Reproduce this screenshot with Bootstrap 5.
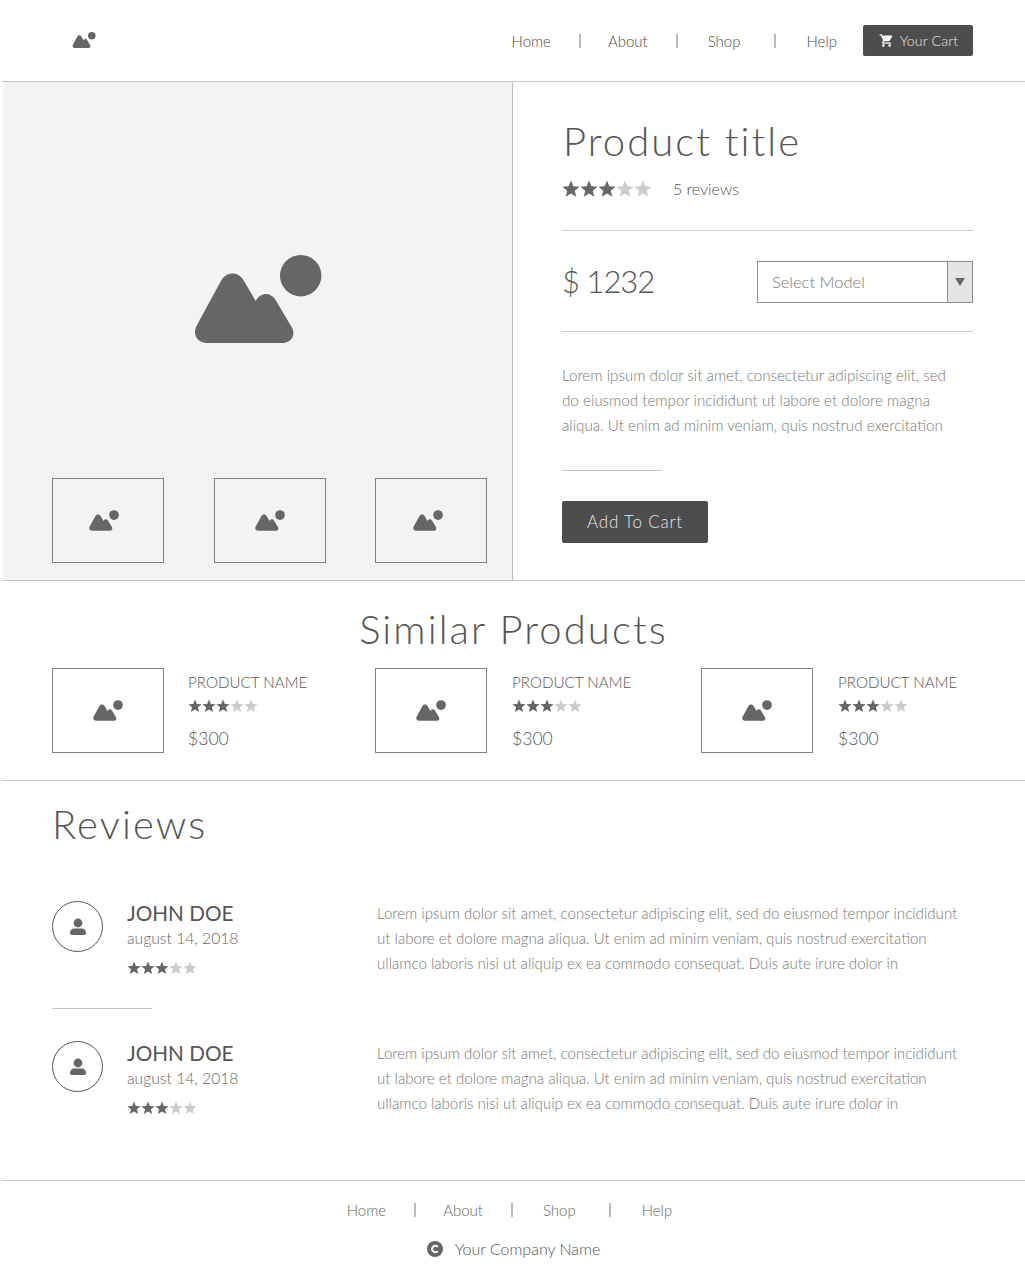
<!DOCTYPE html>
<html lang="en">
<head>
  <meta charset="UTF-8">
  <meta name="viewport" content="width=device-width, initial-scale=1.0">
  <title>Product page</title>
  <link href="https://cdn.jsdelivr.net/npm/bootstrap@5.3.3/dist/css/bootstrap.min.css" rel="stylesheet">
  <style>
    body { font-family: "Lato", "Open Sans", sans-serif; font-weight: 300; color: #555; background: #fff; font-size: 16px; }
    a { color: inherit; text-decoration: none; }
    .ico { fill: #666; display: block; }
    .page-wrap { margin-left: 2px; }

    .top-bar { height: 82px; padding: 25px 52px 0 70px; border-bottom: 1px solid #c8c8c8; }
    .top-logo { margin-top: 7px; }
    .top-nav { padding-top: 5px; font-size: 15px; margin-right: 26px; color: #4a4a4a; }
    .nav-sep { width: 2px; height: 14px; background: #bbb; }
    span.nav-sep:nth-of-type(1) { margin: 0 27px 0 28px; }
    span.nav-sep:nth-of-type(2) { margin: 0 30px 0 28px; }
    span.nav-sep:nth-of-type(3) { margin: 0 31px 0 33px; }
    .cart-btn { width: 110px; height: 31px; background: #4d4d4d; color: #e6e6e6; font-size: 14.2px; font-weight: 300; border-radius: 2px; gap: 6px; padding: 0 0 0 1px; letter-spacing: .1px; }
    .cart-btn:hover { background: #4d4d4d; color: #e6e6e6; }

    .hero { height: 499px; border-bottom: 1px solid #c8c8c8; }
    .hero-left { width: 510px; margin-left: 1px; background: #f3f3f3; border-right: 1px solid #bdbdbd; padding: 173px 25px 0 49px; }
    .hero-pic { padding-right: 23px; }
    .hero-right { width: 460px; padding: 35px 0 0 49px; }
    .thumb-box { width: 112px; height: 85px; border: 1px solid #808080; }
    .thumb-row { margin-top: 135px; }
    .thumb-row .thumb-box:nth-child(1) svg { margin-right: 8px; }
    .thumb-row .thumb-box:nth-child(3) svg { margin-right: 6px; }
    .prod-title { font-size: 40px; font-weight: 300; line-height: 48px; letter-spacing: 2.05px; margin: 0 0 12px 1px; color: #555; }
    .rev-count { font-size: 16px; margin-left: 21px; }
    .price { font-size: 31px; line-height: 40px; letter-spacing: -1px; margin: 0 0 2px; }
    .price-row { padding: 30px 0 28px; margin-top: 29px; border-bottom: 1px solid #ccc; border-top: 1px solid #ccc; height: 102px; }
    .model-pick { width: 216px; height: 42px; border: 1px solid #8c8c8c; font-size: 16.5px; color: #777; }
    .model-label { padding-left: 14px; }
    .model-arrow { width: 25px; background: #e4e4e4; border-left: 1px solid #8c8c8c; }
    .model-tri { width: 0; height: 0; border-left: 5px solid transparent; border-right: 5px solid transparent; border-top: 8px solid #666; }
    .lorem { font-size: 15.2px; line-height: 25px; color: #777; margin: 31px 0 0; }
    .short-rule { width: 100px; border-top: 1px solid #c4c4c4; }
    .hero-rule { margin: 32px 0 30px; }
    .add-btn { width: 146px; height: 42px; background: #4d4d4d; color: #e6e6e6; font-size: 17px; font-weight: 300; letter-spacing: .8px; border-radius: 2px; padding: 0; }
    .add-btn:hover { background: #4d4d4d; color: #e6e6e6; }

    .similar { height: 200px; padding-top: 23px; border-bottom: 1px solid #c8c8c8; }
    .sec-title { font-size: 40px; font-weight: 300; line-height: 50px; letter-spacing: 2.1px; color: #555; margin: 0; }
    .sim-row { margin-top: 14px; padding-left: 50px; }
    .sim-item { width: 323px; }
    .sim-item:nth-child(2) { width: 326px; }
    .sim-item:last-child { width: auto; }
    .sim-name { font-size: 15.2px; line-height: 20px; margin-top: 4px; }
    .sim-stars { margin-top: 7px; }
    .sim-price { font-size: 17.6px; line-height: 24px; margin-top: 14px; }
    .sim-body { padding-left: 25px; }
    .sim-item:first-child .sim-body { padding-left: 24px; }

    .reviews { height: 400px; padding: 18px 0 0 50px; border-bottom: 1px solid #c8c8c8; }
    .rev-item { margin-top: 52px; height: 75px; }
    .rev-item + .short-rule { margin-top: 32px; }
    .rev-item.next { margin-top: 32px; }
    .avatar { width: 51px; height: 51px; border: 1px solid #555; border-radius: 50%; }
    .rev-who { width: 274px; padding-left: 24px; }
    .rev-name { font-size: 20.7px; font-weight: 400; line-height: 26px; color: #555; margin: -1px 0 1px; }
    .rev-date { font-size: 15.7px; line-height: 22px; color: #666; margin-bottom: 12px; }
    .rev-copy { line-height: 25px; font-size: 15.1px; color: #777; width: 600px; }

    .site-foot { padding-top: 18px; }
    .foot-nav { font-size: 15px; color: #666; padding-right: 8px; }
    .foot-copy { margin-top: 15px; font-size: 16px; gap: 12px; }
  </style>
</head>
<body>
  <svg width="0" height="0" class="position-absolute">
    <symbol id="pic" viewBox="0 0 128 88">
      <circle cx="106.7" cy="20.7" r="20.7"/>
      <path d="M13 88C3 88-2 79 3 70L27 26C32 16 45 16 50 26L61.7 46C66 38 75 36 81 44L97 71C103 80 97 88 88 88Z"/>
    </symbol>
    <symbol id="star" viewBox="0 0 20 20">
      <path d="M10 .6l2.6 6.4 6.9.5-5.3 4.4 1.700 6.700L10 15l-5.900 3.600 1.700-6.700L.5 7.500l6.900-.5z"/>
    </symbol>
    <symbol id="person" viewBox="0 0 18 18">
      <circle cx="9" cy="5" r="4.4"/>
      <path d="M1 15c0-3.200 2.500-4.600 4-4.600h8c1.500 0 4 1.400 4 4.600 0 1.200-.6 2-2 2H3c-1.400 0-2-.8-2-2z"/>
    </symbol>
    <symbol id="cart" viewBox="0 0 24 24">
      <path d="M7 18c-1.100 0-1.990.9-1.990 2S5.900 22 7 22s2-.9 2-2-.9-2-2-2zM1 2v2h2l3.600 7.590-1.350 2.450c-.16.28-.25.61-.25.96 0 1.100.9 2 2 2h12v-2H7.420c-.14 0-.25-.11-.25-.25l.03-.12.9-1.630h7.450c.75 0 1.410-.41 1.750-1.030l3.580-6.490c.08-.14.12-.31.12-.48 0-.55-.45-1-1-1H5.210l-.94-2H1zm16 16c-1.100 0-1.990.9-1.990 2s.89 2 1.990 2 2-.9 2-2-.9-2-2-2z"/>
    </symbol>
  </svg>

  <div class="page-wrap">
    <!-- Header -->
    <header class="top-bar d-flex justify-content-between align-items-start">
      <svg class="ico top-logo" width="24" height="16"><use href="#pic"/></svg>
      <div class="d-flex align-items-start">
        <nav class="top-nav d-flex align-items-center">
          <a href="#">Home</a><span class="nav-sep"></span>
          <a href="#">About</a><span class="nav-sep"></span>
          <a href="#">Shop</a><span class="nav-sep"></span>
          <a href="#">Help</a>
        </nav>
        <a href="#" class="btn cart-btn d-flex align-items-center justify-content-center">
          <svg width="15" height="15" fill="#fff"><use href="#cart"/></svg>Your Cart
        </a>
      </div>
    </header>

    <!-- Product -->
    <section class="hero d-flex">
      <div class="hero-left">
        <div class="hero-pic d-flex justify-content-center">
          <svg class="ico" width="128" height="88"><use href="#pic"/></svg>
        </div>
        <div class="thumb-row d-flex justify-content-between" id="thumbs"></div>
      </div>
      <div class="hero-right">
        <h1 class="prod-title">Product title</h1>
        <div class="d-flex align-items-center">
          <div class="rate-big d-flex"></div>
          <span class="rev-count">5 reviews</span>
        </div>
        <div class="price-row d-flex justify-content-between align-items-center">
          <span class="price">$ 1232</span>
          <div class="model-pick d-flex">
            <div class="model-label flex-grow-1 d-flex align-items-center">Select Model</div>
            <div class="model-arrow d-flex align-items-center justify-content-center"><span class="model-tri"></span></div>
          </div>
        </div>
        <p class="lorem">Lorem ipsum dolor sit amet, consectetur adipiscing elit, sed<br>do eiusmod tempor incididunt ut labore et dolore magna<br>aliqua. Ut enim ad minim veniam, quis nostrud exercitation</p>
        <div class="short-rule hero-rule"></div>
        <a href="#" class="btn add-btn d-flex align-items-center justify-content-center">Add To Cart</a>
      </div>
    </section>

    <!-- Similar products -->
    <section class="similar">
      <h2 class="sec-title text-center">Similar Products</h2>
      <div class="sim-row d-flex" id="similar"></div>
    </section>

    <!-- Reviews -->
    <section class="reviews">
      <h2 class="sec-title">Reviews</h2>
      <div id="reviews"></div>
    </section>

    <!-- Footer -->
    <footer class="site-foot text-center">
      <nav class="foot-nav d-flex justify-content-center align-items-center">
        <a href="#">Home</a><span class="nav-sep"></span>
        <a href="#">About</a><span class="nav-sep"></span>
        <a href="#">Shop</a><span class="nav-sep"></span>
        <a href="#">Help</a>
      </nav>
      <div class="foot-copy d-flex justify-content-center align-items-center">
        <svg width="16" height="16" viewBox="0 0 16 16"><circle cx="8" cy="8" r="8" fill="#666"/><path d="M10.800 6a3.200 3.200 0 1 0 0 4" fill="none" stroke="#fff" stroke-width="2"/></svg>
        <span>Your Company Name</span>
      </div>
    </footer>
  </div>

  <script>
    const starRow = size => {
      let html = '';
      for (let i = 0; i < 5; i++) {
        html += `<svg width="${size}" height="${size}" fill="${i < 3 ? '#666' : '#ccc'}"><use href="#star"/></svg>`;
      }
      return `<div class="d-flex">${html}</div>`;
    };

    document.querySelector('.rate-big').innerHTML = starRow(18);

    const picBox = () => `<div class="thumb-box flex-shrink-0 d-flex align-items-center justify-content-center"><svg class="ico" width="30" height="21"><use href="#pic"/></svg></div>`;
    document.getElementById('thumbs').innerHTML = picBox() + picBox() + picBox();

    let sim = '';
    for (let i = 0; i < 3; i++) {
      sim += `<div class="sim-item d-flex">${picBox()}<div class="sim-body">
        <div class="sim-name">PRODUCT NAME</div>
        <div class="sim-stars">${starRow(14)}</div>
        <div class="sim-price">$300</div>
      </div></div>`;
    }
    document.getElementById('similar').innerHTML = sim;

    const copy = 'Lorem ipsum dolor sit amet, consectetur adipiscing elit, sed do eiusmod tempor incididunt<br>ut labore et dolore magna aliqua. Ut enim ad minim veniam, quis nostrud exercitation<br>ullamco laboris nisi ut aliquip ex ea commodo consequat. Duis aute irure dolor in';
    const review = cls => `<div class="rev-item ${cls} d-flex">
        <div class="avatar flex-shrink-0 d-flex align-items-center justify-content-center"><svg class="ico" width="18" height="18"><use href="#person"/></svg></div>
        <div class="rev-who flex-shrink-0">
          <h3 class="rev-name">JOHN DOE</h3>
          <div class="rev-date">august 14, 2018</div>
          ${starRow(14)}
        </div>
        <div class="rev-copy">${copy}</div>
      </div>`;
    document.getElementById('reviews').innerHTML = review('') + '<div class="short-rule"></div>' + review('next');
  </script>
  <script src="https://cdn.jsdelivr.net/npm/bootstrap@5.3.3/dist/js/bootstrap.bundle.min.js"></script>
</body>
</html>
